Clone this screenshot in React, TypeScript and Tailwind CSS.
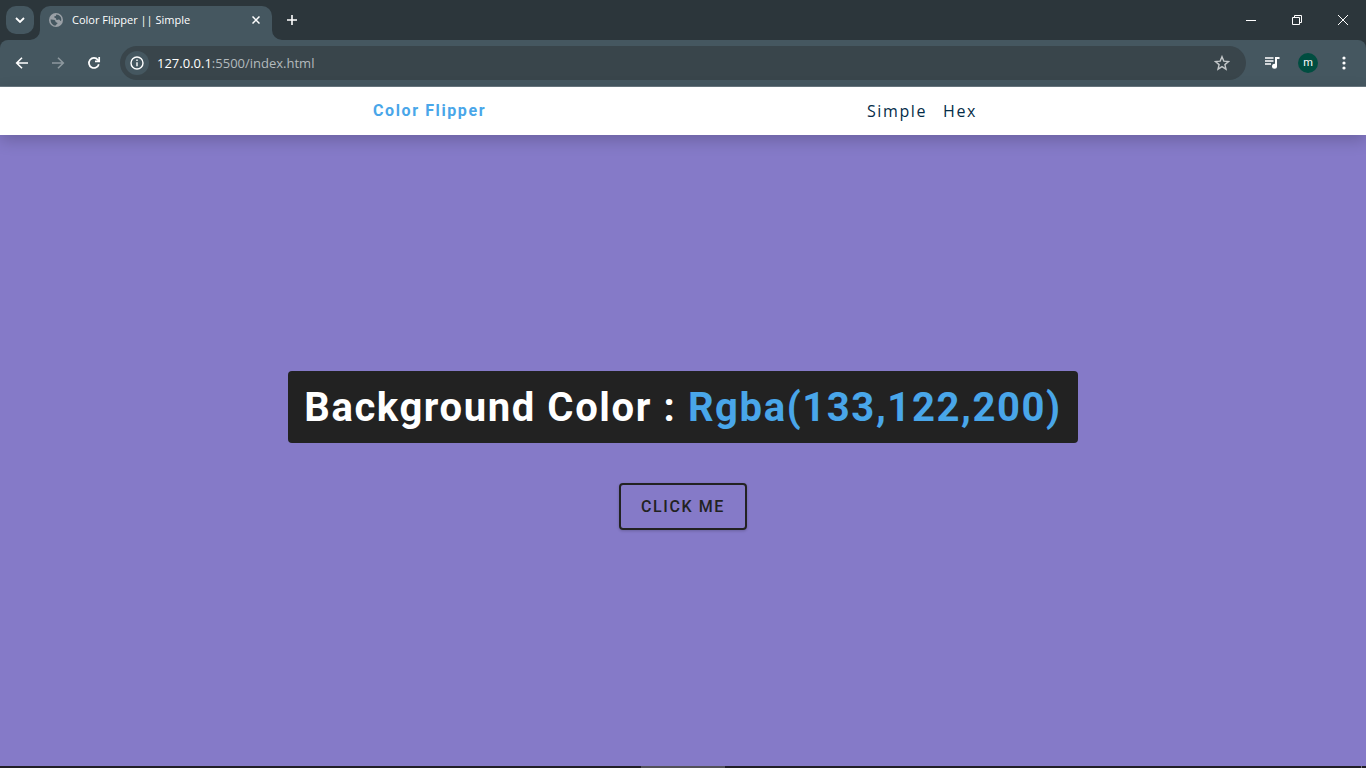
import React, { useState } from "react";

const colors = ["rgba(133,122,200)", "green", "red", "#f15025"];

function TabStrip() {
  return (
    <div className="flex h-10 bg-[#2c363b]">
      <div className="flex flex-1 items-end">
        <button
          type="button"
          aria-label="Search tabs"
          className="mb-1.5 ml-1.5 flex size-7 items-center justify-center rounded-[10px] bg-[#455760]"
        >
          <svg width="10" height="6" viewBox="0 0 10 6" fill="none" stroke="#fff" strokeWidth="1.8">
            <path d="M1 1l4 4 4-4" />
          </svg>
        </button>
        <div className="relative ml-1.5 flex h-[34px] w-[232px] items-center rounded-t-[10px] bg-[#455760] pr-2.5 pb-1.5 pl-2">
          <svg className="absolute bottom-0 -left-2.5" width="10" height="10" viewBox="0 0 10 10" fill="#455760">
            <path d="M10 0v10H0A10 10 0 0 0 10 0z" />
          </svg>
          <svg className="absolute -right-2.5 bottom-0" width="10" height="10" viewBox="0 0 10 10" fill="#455760">
            <path d="M0 0v10h10A10 10 0 0 1 0 0z" />
          </svg>
          <svg width="16" height="16" viewBox="0 0 16 16">
            <circle cx="8" cy="8" r="7" fill="#9aa0a6" />
            <path
              d="M2.6 7.6c1.6.1 3.4 0 4.3.7.8.7.3 1.5 1 1.9.7.4 1.3.1 1.5.8.2.7-.5 1.3-1.3 1.7-.5.3-.6.7-.6 1.1C4.8 13.6 2.5 11 2.6 7.6z"
              fill="#455760"
            />
            <path
              d="M8.6 2.5c-.8.4-.2 1.1-.9 1.5-.7.4-1.5.2-1.5.9 0 .7 1.1.7 1.6 1.3.5.7.2 1.5 1 1.7.9.3 1.3-.6 2.2-.3.9.3.9 1.3 1.9 1.4.3-.6.5-1.3.4-2.1-.2-2.3-2-4.3-4.7-4.4z"
              fill="#455760"
            />
          </svg>
          <span className="ml-2 flex-1 text-[11px] leading-4 whitespace-nowrap text-white">
            Color Flipper || Simple
          </span>
          <button type="button" aria-label="Close tab" className="flex size-3 items-center justify-center">
            <svg width="8" height="8" viewBox="0 0 8 8" stroke="#fff" strokeWidth="1.5">
              <path d="M.5.5l7 7M7.5.5l-7 7" />
            </svg>
          </button>
        </div>
        <button type="button" aria-label="New tab" className="mb-1.5 ml-1.5 flex size-7 items-center justify-center">
          <svg width="10" height="10" viewBox="0 0 10 10" stroke="#fff" strokeWidth="1.6">
            <path d="M5 0v10M0 5h10" />
          </svg>
        </button>
      </div>
      <div className="flex">
        <button type="button" aria-label="Minimize" className="flex w-[46px] items-center justify-center">
          <svg width="10" height="10" viewBox="0 0 10 10" stroke="#fff">
            <path d="M0 5.5h10" />
          </svg>
        </button>
        <button type="button" aria-label="Restore" className="flex w-[46px] items-center justify-center">
          <svg width="10" height="10" viewBox="0 0 10 10" fill="none" stroke="#fff">
            <path d="M.5 2.5h7v7h-7zM2.5 2.5v-2h7v7h-2" />
          </svg>
        </button>
        <button type="button" aria-label="Close window" className="flex w-[46px] items-center justify-center">
          <svg width="10" height="10" viewBox="0 0 10 10" stroke="#fff">
            <path d="M0 0l10 10M10 0L0 10" />
          </svg>
        </button>
      </div>
    </div>
  );
}

function Toolbar() {
  return (
    <div className="bg-[#2c363b]">
      <div className="flex h-[47px] items-center rounded-t-lg border-b border-[#6a7982] bg-[#455760] px-1">
        <button type="button" aria-label="Back" className="flex size-9 items-center justify-center">
          <svg width="16" height="16" viewBox="0 0 16 16" fill="none" stroke="#fff" strokeWidth="1.6">
            <path d="M14 8H3M8 2.7L2.7 8 8 13.3" />
          </svg>
        </button>
        <button type="button" aria-label="Forward" className="flex size-9 items-center justify-center">
          <svg width="16" height="16" viewBox="0 0 16 16" fill="none" stroke="#8d989e" strokeWidth="1.6">
            <path d="M2 8h11M8 2.7L13.3 8 8 13.3" />
          </svg>
        </button>
        <button type="button" aria-label="Reload" className="flex size-9 items-center justify-center">
          <svg width="16" height="16" viewBox="0 0 16 16" fill="none" stroke="#fff" strokeWidth="1.7">
            <path d="M12.8 9.2A5 5 0 1 1 11.9 4.9L13.2 6.2" />
            <path d="M13.2 2v4.3H9" />
          </svg>
        </button>
        <div className="ml-2 flex h-[34px] flex-1 items-center rounded-full bg-[#39454b] pr-4 pl-[5px]">
          <button
            type="button"
            aria-label="Site information"
            className="flex size-6 items-center justify-center rounded-full bg-[#455760]"
          >
            <svg width="14" height="14" viewBox="0 0 14 14" fill="none" stroke="#fff" strokeWidth="1.4">
              <circle cx="7" cy="7" r="6" />
              <path d="M7 6.2v4M7 3.6v1.5" />
            </svg>
          </button>
          <div className="ml-2 flex-1 text-[13px] leading-5 text-[#b3babd]">
            <span className="text-white">127.0.0.1</span>:5500/index.html
          </div>
          <button type="button" aria-label="Bookmark this page">
            <svg width="16" height="16" viewBox="0 0 16 16" fill="none" stroke="#c3c7c9" strokeWidth="1.4">
              <path d="M8 1.7l1.8 4.4 4.7.4-3.6 3.1 1.1 4.6L8 11.7l-4 2.5 1.1-4.6L1.5 6.5l4.7-.4z" />
            </svg>
          </button>
        </div>
        <button type="button" aria-label="Media controls" className="ml-2 flex size-9 items-center justify-center">
          <svg width="16" height="14" viewBox="0 0 16 14" fill="none" stroke="#fff" strokeWidth="1.6">
            <path d="M1 2h8.5M1 5h8.5M1 8h6" />
            <path d="M12 10.5V2h3.5" strokeWidth="2" />
            <circle cx="10.5" cy="10.3" r="2.5" fill="#fff" stroke="none" />
          </svg>
        </button>
        <button type="button" aria-label="Profile" className="flex size-9 items-center justify-center">
          <span className="flex size-5 items-center justify-center rounded-full bg-[#004d40] font-['Roboto',sans-serif] text-[11px] leading-4 text-white">
            m
          </span>
        </button>
        <button type="button" aria-label="Menu" className="flex size-9 items-center justify-center">
          <svg width="4" height="14" viewBox="0 0 4 14" fill="#fff">
            <circle cx="2" cy="2" r="1.6" />
            <circle cx="2" cy="7" r="1.6" />
            <circle cx="2" cy="12" r="1.6" />
          </svg>
        </button>
      </div>
    </div>
  );
}

export default function App() {
  const [index, setIndex] = useState(0);

  return (
    <div className="flex min-h-screen flex-col font-['Open_Sans','Noto_Sans',sans-serif]">
      <TabStrip />
      <Toolbar />
      <nav className="z-10 flex h-12 items-center bg-white shadow-[0_5px_15px_rgba(0,0,0,0.2)]">
        <div className="mx-auto flex w-full max-w-[620px] items-center justify-between">
          <h4 className="font-['Roboto',sans-serif] text-base font-bold tracking-[1.6px] text-[#49a6e9]">
            Color Flipper
          </h4>
          <ul className="flex">
            <li>
              <a href="#simple" className="mr-4 font-medium tracking-[1.6px] text-[#042c47]">
                Simple
              </a>
            </li>
            <li>
              <a href="#hex" className="mr-4 font-medium tracking-[1.6px] text-[#042c47]">
                Hex
              </a>
            </li>
          </ul>
        </div>
      </nav>
      <main
        className="flex flex-1 flex-col items-center justify-center font-['Roboto',sans-serif]"
        style={{ backgroundColor: index === 0 ? "rgb(133,122,200)" : colors[index] }}
      >
        <h2 className="mb-10 rounded bg-[#222] px-4 pt-4 pb-3.5 text-[40px] leading-[42px] font-bold tracking-[1.6px] text-white capitalize">
          Background Color : <span className="text-[#49a6e9]">{colors[index]}</span>
        </h2>
        <button
          type="button"
          onClick={() => setIndex((index + 1) % colors.length)}
          className="rounded border-2 border-[#222] px-5 py-3 text-base leading-[19px] font-medium tracking-[1.6px] text-[#222] uppercase shadow-[0_1px_3px_rgba(0,0,0,0.2)]"
        >
          Click me
        </button>
      </main>
      <div className="grid h-0.5 grid-cols-[1fr_84px_1fr] bg-[#211f27]">
        <div className="col-start-2 bg-[#53515a]" />
        <div className="mr-1 w-px justify-self-end bg-[#77757e]" />
      </div>
    </div>
  );
}
